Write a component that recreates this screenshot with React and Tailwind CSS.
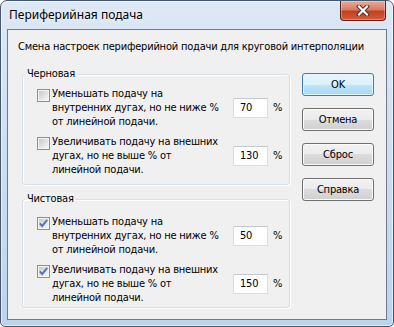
import React from "react";

function CheckBox({ checked }) {
  return (
    <svg width="13" height="13" viewBox="0 0 13 13" className="mt-[2px] shrink-0">
      <defs>
        <linearGradient id="cbg" x1="0" y1="0" x2="1" y2="1">
          <stop offset="0" stopColor="#c6cad0" />
          <stop offset="1" stopColor="#f7f7f7" />
        </linearGradient>
      </defs>
      <rect x="0.5" y="0.5" width="12" height="12" fill="#f4f4f4" stroke="#8e8f8f" />
      <rect x="2" y="2" width="9" height="9" fill="url(#cbg)" />
      {checked && (
        <path d="M2.8 6.3 L5.2 9 L10.2 2.8" stroke="#5a70ad" strokeWidth="1.9" fill="none" strokeLinejoin="miter" />
      )}
    </svg>
  );
}

function Row({ checked, lines, value, className }) {
  return (
    <div className={"flex items-center " + className}>
      <div className="flex items-start ml-[12px]">
        <CheckBox checked={checked} />
        <div className="ml-[2px] w-[181px] whitespace-nowrap">
          {lines.map((l, i) => (
            <div key={i}>{l}</div>
          ))}
        </div>
      </div>
      <div className="w-[35px] h-[20px] bg-white border border-[#dadde2] border-t-[#c4c8ce] pl-[6px] flex items-center">
        {value}
      </div>
      <div className="ml-[5px]">%</div>
    </div>
  );
}

function Btn({ children, primary }) {
  return (
    <div
      className={
        "h-[23px] w-[72px] rounded-[3px] border flex items-center justify-center " +
        (primary
          ? "border-[#3c7fb1] bg-[linear-gradient(to_bottom,#eaf6fd_0%,#d9f0fc_50%,#bee6fd_50%,#a7d9f5_100%)] shadow-[inset_0_0_0_1px_#e6f4fb]"
          : "border-[#707070] bg-[linear-gradient(to_bottom,#f2f2f2_0%,#ebebeb_50%,#dddddd_50%,#cfcfcf_100%)] shadow-[inset_0_0_0_1px_#fbfbfb]")
      }
    >
      {children}
    </div>
  );
}

export default function App() {
  return (
    <div className="w-[394px] h-[327px] bg-white text-[11px] leading-[14px] tracking-[-0.2px] text-black font-['DejaVu_Sans_Condensed','Liberation_Sans',sans-serif]">
      <div className="w-full h-full flex flex-col rounded-t-[7px] rounded-b-[5px] border border-[#46576b] bg-[linear-gradient(to_bottom,#dde8f5,#bcd3ec)] px-[6px] pb-[6px] shadow-[inset_0_0_0_1px_rgba(255,255,255,0.55)]">
        <div className="h-[28px] shrink-0 flex justify-between items-start">
          <div className="ml-[2px] mt-[6px] text-[12px] leading-[16px] tracking-normal font-['Noto_Sans','Open_Sans',sans-serif] [text-shadow:0_0_6px_#fff]">
            Периферийная подача
          </div>
          <div className="w-[46px] h-[20px] mr-[1px] rounded-b-[4px] border border-t-0 border-[#5a1f16] bg-[linear-gradient(to_bottom,#e9ab9b_0%,#db7a62_45%,#c5401f_55%,#d45a3e_100%)] shadow-[inset_0_0_0_1px_rgba(255,255,255,0.3)] flex items-center justify-center">
            <svg width="14" height="11" viewBox="0 0 14 11">
              <path d="M3 1.5 L11 9.5 M11 1.5 L3 9.5" stroke="#4a2620" strokeWidth="4" strokeLinecap="square" />
              <path d="M3 1.5 L11 9.5 M11 1.5 L3 9.5" stroke="#ffffff" strokeWidth="2.2" strokeLinecap="square" />
            </svg>
          </div>
        </div>
        <div className="flex-1 border border-[#6b7a8c] bg-[#f0f0f0] flex flex-col">
          <div className="pl-[10px] pt-[10px] whitespace-nowrap">
            Смена настроек периферийной подачи для круговой интерполяции
          </div>
          <div className="flex pl-[14px] mt-[13px]">
            <div className="w-[268px] flex flex-col">
              <fieldset className="m-0 min-w-0 border border-[#d5dfe5] rounded-[3px] pl-[2px] pr-0 pt-0 pb-[7px] shadow-[inset_1px_1px_0_#fff,1px_1px_0_#fff]">
                <legend className="px-[2px]">Черновая</legend>
                <Row
                  className="mt-[6px]"
                  lines={["Уменьшать подачу на", "внутренних дугах, но не ниже %", "от линейной подачи."]}
                  value="70"
                />
                <Row
                  className="mt-[6px]"
                  lines={["Увеличивать подачу на внешних", "дугах, но не выше % от", "линейной подачи."]}
                  value="130"
                />
              </fieldset>
              <fieldset className="mt-[7px] m-0 min-w-0 border border-[#d5dfe5] rounded-[3px] pl-[2px] pr-0 pt-0 pb-[2px] shadow-[inset_1px_1px_0_#fff,1px_1px_0_#fff]">
                <legend className="px-[2px]">Чистовая</legend>
                <Row
                  checked
                  className="mt-[9px]"
                  lines={["Уменьшать подачу на", "внутренних дугах, но не ниже %", "от линейной подачи."]}
                  value="50"
                />
                <Row
                  checked
                  className="mt-[6px]"
                  lines={["Увеличивать подачу на внешних", "дугах, но не выше % от", "линейной подачи."]}
                  value="150"
                />
              </fieldset>
            </div>
            <div className="ml-[12px] mt-[6px] flex flex-col gap-[12px]">
              <Btn primary>OK</Btn>
              <Btn>Отмена</Btn>
              <Btn>Сброс</Btn>
              <Btn>Справка</Btn>
            </div>
          </div>
        </div>
      </div>
    </div>
  );
}
